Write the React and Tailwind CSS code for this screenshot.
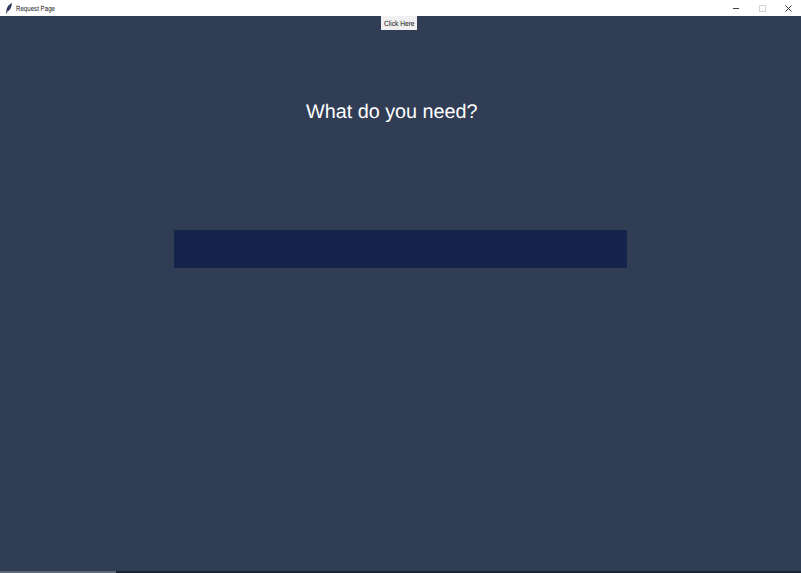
const App = () => {
  return (
    <div className="flex h-[573px] w-[801px] flex-col overflow-hidden bg-[#303d55] font-['Liberation_Sans',Arial,sans-serif]">
      {/* title bar */}
      <div className="flex h-4 shrink-0 items-center bg-white">
        <svg className="ml-[5px] h-[11px] w-[8px]" viewBox="0 0 8 11">
          <path d="M7 0C4.5 1 2.5 3.2 1.6 6.2L1 10.5l.8.1.7-2.3C5 7.6 6.6 4 7 0z" fill="#2f3a5c" />
        </svg>
        <span className="ml-[3px] origin-left scale-x-[0.82] pt-px text-[7.5px] leading-none text-[#222] [text-rendering:geometricPrecision]">Request Page</span>
        <div className="ml-auto flex items-center">
          <div className="h-px w-[6px] bg-[#444]" />
          <div className="ml-[20px] h-[7px] w-[7px] border border-[#d4d4d4]" />
          <svg className="ml-[19px] mr-[9px] h-[7px] w-[7px]" viewBox="0 0 7 7">
            <path d="M0.5 0.5l6 6M6.5 0.5l-6 6" stroke="#333" strokeWidth="1" fill="none" />
          </svg>
        </div>
      </div>

      {/* page */}
      <div className="flex flex-1 flex-col">
        <div className="ml-[381px] flex h-[14px] w-[36px] items-center justify-center bg-[#f0f0f0] pl-px pt-[2px]">
          <span className="scale-x-[0.88] whitespace-nowrap text-[7.5px] leading-none text-[#111] [text-rendering:geometricPrecision]">Click Here</span>
        </div>
        <h1 className="ml-[306px] mt-[70px] whitespace-nowrap text-[19.8px] font-normal leading-[24px] text-white [text-rendering:geometricPrecision]">
          What do you need?
        </h1>
        <div className="ml-[174px] mt-[106px] h-[38px] w-[453px] bg-[#15244a]" />
      </div>

      {/* bottom strip */}
      <div className="flex h-[2px] shrink-0">
        <div className="w-[116px] bg-[#5d6675]" />
        <div className="flex-1 bg-[#1c2434]" />
      </div>
    </div>
  )
}

export default App
